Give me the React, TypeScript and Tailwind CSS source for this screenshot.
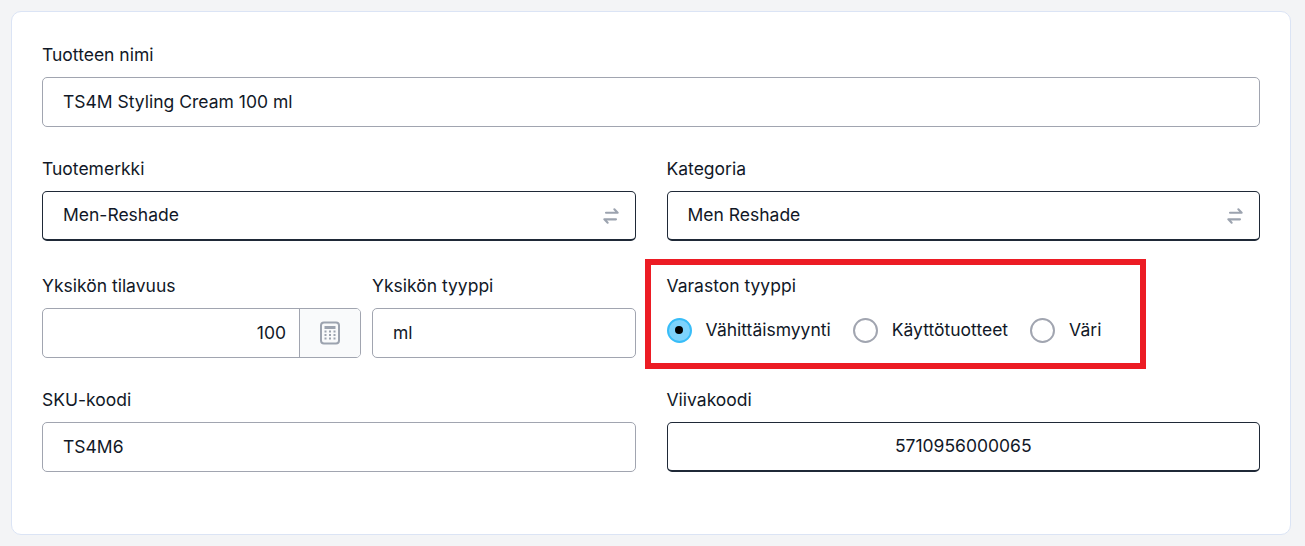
import React from "react";

const Swap = () => (
  <svg width="20" height="20" viewBox="0 0 24 24" fill="none" stroke="#9ca3af" strokeWidth="2.5" strokeLinecap="round" strokeLinejoin="round">
    <path d="M6 8h14l-4-4" />
    <path d="M18 16H4l4 4" />
  </svg>
);

const Calc = () => (
  <svg width="22" height="24" viewBox="0 0 22 24" fill="none">
    <rect x="2" y="1.5" width="18" height="21" rx="3" stroke="#9ca3af" strokeWidth="2" />
    <rect x="5.5" y="5" width="11" height="3" fill="#9ca3af" />
    {[10.5, 14, 17.5].map((y) =>
      [6.5, 11, 15.5].map((x) => <rect key={`${x}-${y}`} x={x - 1} y={y - 1} width="2" height="2" fill="#9ca3af" />)
    )}
  </svg>
);

const Label = ({ children }: { children: React.ReactNode }) => (
  <div className="text-[17.5px] leading-[22px] text-[#111827] mb-[11px]">{children}</div>
);

const Input = ({ value, dark, center }: { value: string; dark?: boolean; center?: boolean }) => (
  <div
    className={`h-[50px] rounded-[5px] border bg-white flex items-center px-5 text-[17.5px] text-[#111827] ${
      dark ? "border-[#1f2937] border-b-2" : "border-[#a1a5b0]"
    } ${center ? "justify-center" : ""}`}
  >
    {value}
  </div>
);

const Select = ({ value }: { value: string }) => (
  <div className="h-[50px] rounded-[5px] border border-[#1f2937] border-b-2 bg-white flex items-center justify-between pl-5 pr-[14px] text-[17.5px] text-[#111827]">
    <span>{value}</span>
    <Swap />
  </div>
);

const Radio = ({ checked, label }: { checked?: boolean; label: string }) => (
  <div className="flex items-center gap-[14px]">
    {checked ? (
      <div className="w-[25px] h-[25px] rounded-full bg-[#7dd3fc] border-2 border-[#38bdf8] flex items-center justify-center">
        <div className="w-[8px] h-[8px] rounded-full bg-black" />
      </div>
    ) : (
      <div className="w-[25px] h-[25px] rounded-full border-2 border-[#a1a5b0] bg-white" />
    )}
    <span className="text-[17.5px] text-[#111827]">{label}</span>
  </div>
);

export default function App() {
  return (
    <div className="w-[1305px] h-[546px] bg-[#f3f4f6] pt-[11px] pl-[11px]" style={{ fontFamily: "Inter, 'Noto Sans', sans-serif" }}>
      <div className="relative w-[1280px] h-[524px] bg-white border border-[#dbe4f5] rounded-[10px] px-[30px] pt-[32px]">
        <Label>Tuotteen nimi</Label>
        <Input value="TS4M Styling Cream 100 ml" />
        <div className="grid grid-cols-2 gap-x-[31px] mt-[31px]">
          <div>
            <Label>Tuotemerkki</Label>
            <Select value="Men-Reshade" />
          </div>
          <div>
            <Label>Kategoria</Label>
            <Select value="Men Reshade" />
          </div>
        </div>
        <div className="grid grid-cols-2 gap-x-[31px] mt-[34px]">
          <div className="grid grid-cols-[319px_1fr] gap-x-[11px]">
            <div>
              <Label>Yksikön tilavuus</Label>
              <div className="h-[50px] rounded-[5px] border border-[#a1a5b0] flex overflow-hidden">
                <div className="flex-1 flex items-center justify-end pr-[13px] text-[17.5px] text-[#111827]">100</div>
                <div className="w-[61px] border-l border-[#a1a5b0] bg-[#f9fafb] flex items-center justify-center">
                  <Calc />
                </div>
              </div>
            </div>
            <div>
              <Label>Yksikön tyyppi</Label>
              <Input value="ml" />
            </div>
          </div>
          <div>
            <Label>Varaston tyyppi</Label>
            <div className="flex items-center gap-[22px] h-[30px] mt-[18px]">
              <Radio checked label="Vähittäismyynti" />
              <Radio label="Käyttötuotteet" />
              <Radio label="Väri" />
            </div>
          </div>
        </div>
        <div className="grid grid-cols-2 gap-x-[31px] mt-[31px]">
          <div>
            <Label>SKU-koodi</Label>
            <Input value="TS4M6" />
          </div>
          <div>
            <Label>Viivakoodi</Label>
            <Input value="5710956000065" dark center />
          </div>
        </div>
        <div className="absolute left-[633px] top-[247px] w-[501px] h-[110px] border-[6px] border-[#ec1c24] pointer-events-none" />
      </div>
    </div>
  );
}
